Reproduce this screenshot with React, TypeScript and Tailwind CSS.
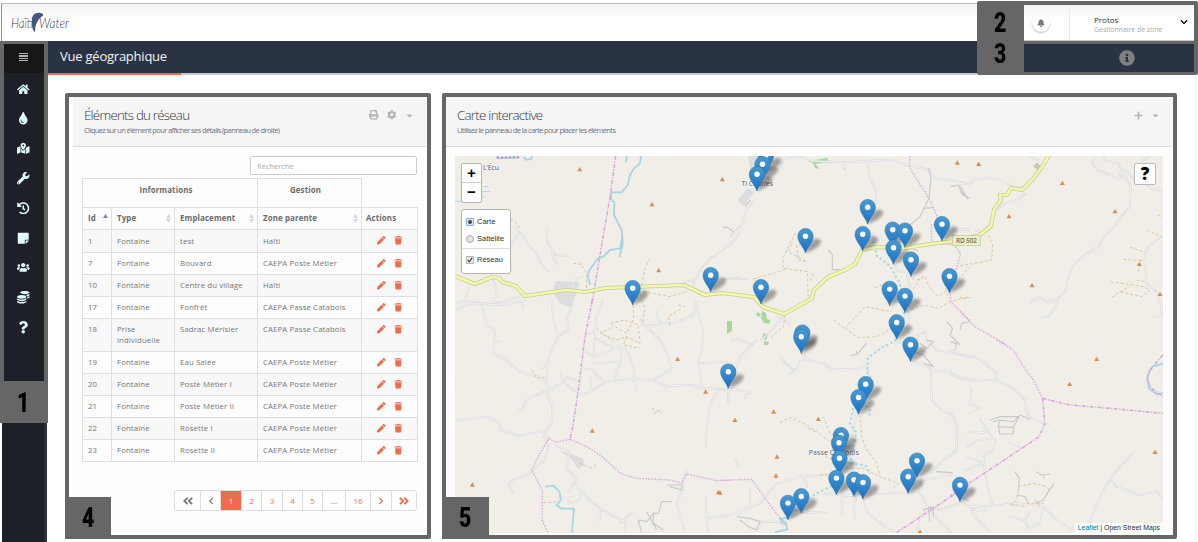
import React from 'react';
import {
  FaHome, FaTint, FaMapMarkedAlt, FaWrench, FaHistory, FaStickyNote, FaUsers, FaCoins,
  FaQuestion, FaPrint, FaCog, FaCaretDown, FaPlus, FaPen, FaTrash, FaBell, FaInfoCircle, FaChevronDown,
  FaChevronLeft, FaChevronRight, FaAngleDoubleLeft, FaAngleDoubleRight,
} from 'react-icons/fa';

const menu = [FaHome, FaTint, FaMapMarkedAlt, FaWrench, FaHistory, FaStickyNote, FaUsers, FaCoins, FaQuestion];

const rows = [
  ['1', 'Fontaine', 'test', 'Haïti'],
  ['7', 'Fontaine', 'Bouvard', 'CAEPA Poste Métier'],
  ['10', 'Fontaine', 'Centre du village', 'Haïti'],
  ['17', 'Fontaine', 'Fonfrèt', 'CAEPA Passe Catabois'],
  ['18', 'Prise individuelle', 'Sadrac Mérisier', 'CAEPA Passe Catabois'],
  ['19', 'Fontaine', 'Eau Salée', 'CAEPA Poste Métier'],
  ['20', 'Fontaine', 'Poste Métier I', 'CAEPA Poste Métier'],
  ['21', 'Fontaine', 'Poste Métier II', 'CAEPA Poste Métier'],
  ['22', 'Fontaine', 'Rosette I', 'CAEPA Poste Métier'],
  ['23', 'Fontaine', 'Rosette II', 'CAEPA Poste Métier'],
];

type Tile = {
  x: number; y: number;
  roads?: string; paths?: string; tracks?: string; water?: string; stream?: string;
  border?: string; limit?: string; peaks?: number[][];
};

const tiles: Tile[] = [
  {
    x: 440, y: 85,
    roads: 'M45 287 60 280M138 420 155 432M326 562 300 532 292 508 264 478 254 458 238 440 225 462 195 500 212 530 212 560M238 440 222 425M320 428 320 470 335 490 340 520 354 540M332 485 350 515 386 510M900 440 880 470 850 495 810 520 785 550 765 585 760 605M765 585 740 590 715 605M835 582 900 580M45 655 80 648 130 655 190 650 250 632M160 580 170 620 165 640M90 600 75 640M410 622 395 600 412 580 430 575',
    paths: 'M848 427 862 427 882 442',
    tracks: 'M212 402 232 415 240 435M400 535 425 538 440 565 440 620M630 520 615 550 605 600 590 640 580 655M610 620 690 635 740 620',
    water: 'M168 215 175 220 238 216M250 216 258 224 274 222 277 213M560 213 558 232M603 213 600 235 582 250 570 270 563 300 545 322 513 322M513 322 513 342 523 352 522 390 545 435 547 455 542 480 541 490 510 495 490 515 474 520 447 558 443 572 451 600M547 455 548 480 538 517',
    stream: 'M45 349 85 349M125 320 152 319M130 305 145 305M120 336 135 336',
    border: 'M527 213 511 330 490 450 470 570 455 660',
    peaks: [[419, 253], [847, 283], [636, 358], [656, 556]],
  },
  {
    x: 730, y: 145,
    roads: 'M70 170 50 195 35 240 0 275M120 75 152 70 160 42 210 35 250 48 340 52 412 48 480 44 535 62 600 75 615 100 650 105 720 115M412 48 418 95 438 135 438 165 420 190 415 235M0 402 55 402M155 515 130 550 90 590M155 515 180 540M490 350 500 375 530 385 540 430 525 470 538 520 528 560M570 600 562 570 585 560 590 590M420 280 428 265 438 285M665 253 720 255M0 590 20 580 70 600',
    paths: 'M595 68 603 98 597 160 570 215 540 240M580 190 610 188M295 315 307 328 307 374 332 374M650 530 668 550 660 570 690 600M662 125 685 120 698 150 720 160M720 530 695 535 690 555M545 310 565 318M45 185 62 165',
    tracks: 'M235 470 232 380 160 370 158 340 195 265 235 290 200 300 205 345 230 350 175 320 190 290M70 402 130 385 170 372M165 510 160 545 120 580M250 385 240 410M545 400 560 405 585 395 600 430 625 455 660 430 720 365M530 500 580 480 625 490 660 470 720 457M310 525 345 550 405 485 485 500M345 550 385 578 440 575 485 550M435 428 480 412M570 400 545 440M640 400 655 460',
    stream: 'M338 66 348 77',
    limit: 'M541 33 538 65 565 110 600 165 622 215 620 240 604 240 605 296 670 298M670 298 692 325 680 370 660 420 662 470 720 527',
    peaks: [[682, 53]],
  },
  {
    x: 960, y: 145,
    roads: 'M0 115 30 118 42 103 80 97 120 105 160 125 200 128M200 145 170 165 135 175 110 195M0 253 28 253M208 34 240 48M405 34 396 55 415 75 450 90 475 103 490 90 512 120 510 185 475 225 460 250 435 270 415 305 380 325 355 345 335 370 322 405 318 435 290 465 255 467 235 455 208 475M290 465 290 480 265 515 238 520M430 35 440 48 475 55 485 75 475 103M485 75 505 80 515 95 530 115M605 275 590 285 560 310 553 350 560 415 590 440 604 480 605 510 575 518M540 48 570 36M555 115 575 132 607 135M45 260 60 255',
    paths: 'M0 122 24 163M0 140 16 150',
    tracks: 'M85 270 98 300 95 345 70 350 0 363M560 255 605 275M510 307 555 322M490 343 550 347M452 410 550 425 570 435 545 455 480 440 452 460M480 440 510 425M530 405 555 410M535 380 545 340M0 458 25 457M595 212 608 214',
    limit: 'M0 500 45 545 140 600',
    peaks: [[56, 57], [307, 114], [147, 214], [465, 199], [538, 357], [600, 447], [216, 421]],
  },
  {
    x: 440, y: 300,
    roads: 'M125 15 140 75 165 90 160 160 205 185 240 215 310 235 325 265 325 295 338 325 335 370 310 400 330 415M165 125 185 128M45 28 95 10 190 15 260 0M245 0 250 30M335 0 340 60 355 110 385 90 380 55 395 20M355 110 330 160 320 200 322 260M320 200 300 205M323 270 290 285 260 300 245 330 232 333M45 362 145 350 178 370 182 390 240 408 300 395 322 390M310 400 325 440 315 480 260 525 220 538 205 555 222 580M345 435 390 455 378 505 405 530 415 565 450 600 480 625 560 670M480 625 478 665M330 270 370 245 385 230 415 245M362 215 370 245 400 270 415 283 440 280 500 245 580 235 640 242 680 258 750 255 790 265 865 268M580 235 590 275M640 242 695 205 680 155 660 120 615 75 640 75 700 70 760 45 770 0M615 75 600 55M680 258 678 278M650 30 655 60 680 75M490 0 468 50 465 110 460 170 435 155M465 110 500 135 540 140 545 175 530 220 520 245M460 170 510 155 525 135M460 190 530 185M450 230 455 275M425 205 460 210 470 225 500 250M555 140 580 200 585 235M770 20 790 90 785 150 775 185 785 265M775 190 865 185M835 270 810 315 800 385 797 440M865 268 865 310M745 510 730 530 728 570 710 610 735 698M797 585 800 655 870 645M800 655 805 698M45 235 45 270M385 580 400 545 425 575 420 600 390 610 380 590M350 600 400 590M540 670 575 640M560 660 555 698M430 110 470 90',
    paths: 'M680 555 725 555 725 570 690 560M695 605 665 605 655 640 640 640 620 665 595 660 605 698M620 635 650 690M640 640 640 670 670 690',
    tracks: 'M275 210 290 235 315 232M580 15 580 60 560 100 510 70 555 60 595 75 600 130 560 110 530 120 480 100 515 85M470 85 520 125M560 110 550 135 600 145M605 0 615 25 605 75M715 15 735 20M635 325 665 340M640 342 665 328M420 490 455 505 472 490M310 608 360 605M690 75 685 50 725 25',
    water: 'M315 560 340 557 358 575 363 600 350 615 365 626 402 626 396 698',
    border: 'M457 0 435 110 415 270 400 370 390 418',
    limit: 'M390 418 347 427 327 415 300 460 275 508 307 572 306 660 323 697M390 418 440 440 480 465 545 522 590 535 690 540 725 550 740 522 830 542 870 541',
    peaks: [[713, 177], [797, 275], [457, 392], [97, 554], [835, 576]],
  },
  {
    x: 720, y: 340,
    roads: 'M110 0 60 50 50 85M0 150 55 148 98 160M27 148 28 190M85 155 75 175M244 38 265 60 310 70 340 88 400 88 440 76M265 55 240 65 230 85 205 105M180 55 220 90M440 76 445 95M410 225 395 285 400 320 370 400M400 220 440 220 455 210M0 528 50 520 120 490 170 430 245 410 350 400M250 410 262 435 250 462 260 490M350 460 310 462M365 468 480 462 600 455 620 500 660 510 750 480M410 468 400 510 407 542M365 468 365 530M430 475 440 515 480 550 525 578M120 545 180 545 240 520 320 515M600 455 605 420 640 415 700 400M525 12 560 0M572 62 620 80 632 90 635 180 665 210 700 230 712 270 710 330 660 370 630 400M632 90 690 95 720 115 750 118M620 0 650 30 700 40 750 50M45 358 58 378M620 500 600 530 590 578M90 445 90 500 55 520M620 500 660 545 695 578',
    paths: 'M393 46 412 42 440 10M412 42 408 32M50 530 90 535 120 545 110 570 85 560 60 540M180 545 190 555M580 35 610 45 640 80 610 70M600 10 620 25 640 5 620 0M648 395 698 398M610 510 640 500 640 530M625 500 630 545',
    tracks: 'M180 248 210 232 250 250 290 275 330 305M310 230 330 280 380 300M420 225 425 290 440 330 470 370 480 410 535 430 515 450M380 385 430 385 475 408M265 265 285 275M300 405 345 405M315 350 345 360M395 285 370 290',
    water: 'M205 532 180 537 198 550 202 568 165 577',
    limit: 'M0 421 95 418 150 495 200 560',
    border: 'M530 578 750 432',
    peaks: [[45, 240], [161, 215], [295, 237], [171, 350], [168, 407], [600, 575], [0, 458]],
  },
  {
    x: 950, y: 340,
    roads: 'M0 30 35 45 75 50 110 75 140 100 138 118 100 122 50 118 0 102M138 118 180 140 200 155 225 180 232 220 245 235 298 256M63 145 60 190 92 205 55 220M0 215 20 250 20 330 0 350M90 235 110 270 100 278 50 275M110 270 135 300 130 330 100 350 105 400 115 450 128 500M50 320 85 300 135 295M50 350 100 370 45 390M172 308 215 322M30 485 60 500 130 498 200 490 280 500 320 540 370 572M60 500 75 530 118 575M80 495 70 515 110 508M175 530 225 540 240 515M225 540 235 565 270 550 280 500M552 330 540 350 515 375 480 415 500 440 570 465 620 455 640 478M480 415 440 490 410 572M590 120 600 150 635 160M0 415 0 405',
    paths: 'M120 240 150 230 205 230 190 245 145 240 130 245M145 260 190 262 190 282 150 282 145 260 150 240M190 262 210 225 240 238M195 395 208 415 205 450M258 395 275 405 302 402M280 405 282 415M200 465 225 470 235 490M255 490 280 480 295 455 312 430M0 5 20 10 15 30M30 470 55 482',
    tracks: 'M205 440 250 430 290 440 300 455M205 450 200 480 180 495 225 500M230 490 280 490 255 480 270 500',
    water: 'M640 70 625 75 610 78 597 95 593 115 597 145 620 163 640 160',
    limit: 'M140 0 190 30 220 80 250 120 278 175',
    border: 'M278 175 360 195 490 206 640 220M278 175 284 250 268 290 200 335 0 468M638 45 600 90 590 118 605 145 640 170',
    peaks: [[440, 57], [359, 132], [615, 336]],
  },
];

const pins = [
  [766, 172], [762.5, 181], [757, 191], [867.7, 224], [942, 241], [892.7, 246.5], [905, 247.5],
  [862.7, 251], [805.5, 253], [893.5, 264.5], [911, 276.5], [710.7, 292], [949.5, 293], [761, 304],
  [632.7, 305], [889.7, 305.8], [905, 312.8], [896.7, 339.2], [802.3, 349.5], [801.3, 353.5], [910.5, 361.5],
  [728.3, 388.5], [865.7, 401], [858.5, 414.2], [841, 452], [839, 459.500], [839.5, 475], [917, 477.5],
  [908.2, 493.5], [836.4, 494.8], [854, 496.5], [863, 499.2], [960, 501.8], [801.3, 513.2], [788, 519.8],
];

const mainRoad =
  'M455 276 475 284 492 277 499 278 502 282 516 286 525 296 566 290 585 292 606 288 684 285 705 295 722 293 754 297 763 307 784 314 806 302 812 298 814 290 828 277 845 270 855 264 862 250 876 247 905 248 930 244 955 241 980 235 991 226 994 210 1001 200 1000 195 1007 195 1011 188 1022 190 1033 179 1042 167 1049 155';

function MapDrawing() {
  return (
    <svg viewBox="455 156 708 377" className="block h-full w-full" fontFamily="'Open Sans', sans-serif">
      <defs>
        <linearGradient id="pin" x1="0" y1="0" x2="0" y2="1">
          <stop offset="0" stopColor="#4b9bd0" />
          <stop offset="1" stopColor="#1a6fc4" />
        </linearGradient>
        <filter id="soft" x="-50%" y="-50%" width="200%" height="200%">
          <feGaussianBlur stdDeviation="1.6" />
        </filter>
      </defs>
      <rect x="455" y="156" width="708" height="377" fill="#f1eee8" />
      <g fill="#dddddd">
        <path d="M555 281 579 282 577 292 571 308 560 303 553 292Z" />
        <path d="M748 156 766 156 757 190 752 178Z" />
        <path d="M559 450 582 458 585 465 578 469 573 461Z" />
        <path d="M737 200 748 188 754 192 744 206Z" />
      </g>
      <g fill="#a8d5a0">
        <path d="M808 161 827 158 829 162 815 164 820 169 815 168 813 163Z" />
        <path d="M727 321h5v10l-5 3Z" />
        <path d="M757 312l4 2-2 3-3-2ZM762 311l4 2 1 6 3 1-1 4-5-1-3-5ZM764 333l4 2-2 5-4-3ZM764 341l5 1-1 3-4 0Z" />
      </g>
      {tiles.map((t) => (
        <g key={`${t.x}-${t.y}`} transform={`translate(${t.x} ${t.y}) scale(0.33333)`} fill="none" strokeLinejoin="round">
          <path d={t.roads} stroke="#d6d6da" strokeWidth="5.8" />
          <path d={t.roads} stroke="#f8f7f4" strokeWidth="2.6" />
          <path d={t.paths} stroke="#c9c9c9" strokeWidth="3.5" />
          <path d={t.tracks} stroke="#dcc39a" strokeWidth="2.8" strokeDasharray="9 6" />
          <path d={t.water} stroke="#a9d5e2" strokeWidth="5.5" />
          <path d={t.stream} stroke="#a5cdf0" strokeWidth="2.5" />
          <path d={t.border} stroke="#daa4dc" strokeWidth="4.5" strokeDasharray="12 4 4 4" />
          <path d={t.limit} stroke="#dcaedd" strokeWidth="4.2" strokeDasharray="5 4" />
          {t.peaks?.map(([x, y]) => (
            <path key={`${x}-${y}`} d={`M${x} ${y - 7}l7.5 13h-15Z`} fill="#d68d50" />
          ))}
        </g>
      ))}
      <path d="M497 157.500H520" stroke="#c08cc8" strokeWidth="1.800" strokeDasharray="2 2" />
      <path
        d="M872 236 877 256 890 266 899 282 905 300 903 324 895 341 881 348 868 358 867 372 871 378M853 408 850 424 856 432 853 455 846 470M863 402 871 412 869 416M846 462 866 466 870 474M832 486 815 494 803 505 788 516"
        fill="none" stroke="#a9d9e6" strokeWidth="2.100" strokeDasharray="2.400 2.400"
      />
      <path d={mainRoad} fill="none" stroke="#c8cd8b" strokeWidth="4.200" strokeLinejoin="round" />
      <path d={mainRoad} fill="none" stroke="#f3f6b2" strokeWidth="2.700" strokeLinejoin="round" />
      <path d="M1037 162.500 1041 166 1037 169.500 1033 166Z" fill="#c8c7b2" />
      <rect x="952.500" y="235.500" width="28" height="10" fill="#ecefcb" stroke="#cdd2a4" />
      <g fill="#555" fontSize="7" stroke="#fff" strokeWidth="1" strokeOpacity="0.600" paintOrder="stroke">
        <text x="483" y="170" textLength="16">L'Écu</text>
        <text x="741.500" y="186.300" textLength="31.500">Ti Charles</text>
        <text x="808.800" y="455" textLength="50">Passe Catabois</text>
      </g>
      <text x="956" y="243" fontSize="6.500" fontWeight="600" fill="#6e7158" textLength="21">RD 502</text>
      {pins.map(([x, y]) => (
        <path key={`s${x}-${y}`} d={`M${x} ${y}c2-7 5-13 10-14 6-1 7 3 3 7-3 3-8 5-13 7Z`} fill="#000" opacity="0.33" filter="url(#soft)" />
      ))}
      {pins.map(([x, y]) => (
        <g key={`${x}-${y}`} transform={`translate(${x} ${y})`}>
          <path d="M0 0C-1.500-5.500-7.700-10.500-7.700-16.800A7.700 7.800 0 0 1 7.700-16.800C7.700-10.500 1.500-5.500 0 0Z" fill="url(#pin)" stroke="#2e78b4" strokeWidth="0.600" />
          <circle cy="-16.700" r="2.700" fill="#fff" />
        </g>
      ))}
    </svg>
  );
}

function Num({ children }: { children: React.ReactNode }) {
  return (
    <span className="inline-block scale-x-[0.76] font-['Roboto',sans-serif] text-[28px] leading-none font-black text-black">
      {children}
    </span>
  );
}

function Sorter() {
  return (
    <svg viewBox="0 0 5 9" className="h-[9px] w-[5px] shrink-0 fill-[#d5d5d5]">
      <path d="M2.500 0 5 4H0ZM2.500 9 5 5H0Z" />
    </svg>
  );
}

function PanelTitle({ title, sub, titleClass, subClass, children }: {
  title: string; sub: string; titleClass: string; subClass: string; children: React.ReactNode;
}) {
  return (
    <div className="flex h-[50px] shrink-0 justify-between border-b border-[#dadada] bg-[#f5f5f5] pt-[10px] pl-[11px]">
      <div>
        <h2 className={`text-[13.3px] leading-[17px] text-[#33353f] ${titleClass}`}>{title}</h2>
        <p className={`mt-px text-[7.5px] leading-[10px] text-[#6c7386] ${subClass}`}>{sub}</p>
      </div>
      <div className="flex h-[16px] items-center text-[#b4b4b4]">{children}</div>
    </div>
  );
}

const cell = 'border border-[#dfdfdf] px-[5px] align-top';

function NetworkTable() {
  return (
    <table className="mt-[3px] w-[335px] table-fixed border-collapse text-left text-[7.8px] leading-[11px] tracking-[0.12px] text-[#777]">
      <colgroup>
        <col className="w-[29px]" />
        <col className="w-[63px]" />
        <col className="w-[83px]" />
        <col className="w-[104px]" />
        <col className="w-[56px]" />
      </colgroup>
      <thead className="text-[7.9px] font-bold text-[#6b6b6b]">
        <tr className="h-[29px]">
          <th colSpan={3} className="border border-[#dfdfdf] pt-[6px] pr-[8px] text-center align-top">Informations</th>
          <th className="border border-[#dfdfdf] pt-[6px] pr-[8px] text-center align-top">Gestion</th>
          <th className="border-b border-[#dfdfdf]" />
        </tr>
        <tr className="h-[22px]">
          <th className="border border-[#dfdfdf] pr-[3px] pl-[5px]">
            <div className="flex items-center justify-between">Id
              <svg viewBox="0 0 5 9" className="h-[9px] w-[5px] fill-[#7b80d8]"><path d="M2.500 0 5 4H0Z" /></svg>
            </div>
          </th>
          {['Type', 'Emplacement', 'Zone parente'].map((h) => (
            <th key={h} className="border border-[#dfdfdf] pr-[3px] pl-[5px]">
              <div className="flex items-center justify-between">{h}<Sorter /></div>
            </th>
          ))}
          <th className="border border-[#dfdfdf] pl-[4px]">Actions</th>
        </tr>
      </thead>
      <tbody>
        {rows.map((r, i) => (
          <tr key={r[0]} className={`${i % 2 ? 'bg-[#fdfdfd]' : 'bg-[#f8f8f8]'} ${i === 4 ? 'h-[33px]' : i === 0 ? 'h-[23px]' : 'h-[22px]'}`}>
            {r.map((c, j) => (
              <td key={j} className={`${cell} ${i === 0 ? 'pt-[6px]' : 'pt-[5px]'}`}>{c}</td>
            ))}
            <td className={`${cell} pt-[6px]`}>
              <div className="flex gap-[8px] pl-[10px] text-[8.5px] text-[#f06a4d]"><FaPen /><FaTrash /></div>
            </td>
          </tr>
        ))}
      </tbody>
    </table>
  );
}

const pages: { w: string; c: React.ReactNode; k: string }[] = [
  { w: 'w-[26px] text-[#777] text-[12px]', c: <FaAngleDoubleLeft />, k: 'first' },
  { w: 'w-[20px] text-[#777] text-[8px]', c: <FaChevronLeft />, k: 'prev' },
  { w: 'w-[21px] bg-[#f06a4d] text-white', c: '1', k: '1' },
  { w: 'w-[20px]', c: '2', k: '2' },
  { w: 'w-[21px]', c: '3', k: '3' },
  { w: 'w-[20px]', c: '4', k: '4' },
  { w: 'w-[20px]', c: '5', k: '5' },
  { w: 'w-[23px] text-[#777]', c: '...', k: 'gap' },
  { w: 'w-[25px]', c: '16', k: '16' },
  { w: 'w-[21px] text-[8px]', c: <FaChevronRight />, k: 'next' },
  { w: 'w-[24px] text-[12px]', c: <FaAngleDoubleRight />, k: 'last' },
];

export default function App() {
  return (
    <div className="grid h-[542px] w-[1198px] grid-cols-[48px_929px_221px] grid-rows-[41px_34px_467px] overflow-hidden bg-white font-['Open_Sans',sans-serif]">
      <header className="col-span-2 flex pt-[3px] pl-[1px]">
        <div className="flex flex-1 items-center border-t border-l border-t-[#bdbdbd] border-l-[#8d8d8d] bg-linear-to-b from-[#f3f3f3] to-white to-40% pl-[8px]">
          <svg viewBox="0 0 72 26" className="h-[26px] w-[72px]" fontFamily="Lato, sans-serif" fontStyle="italic" fill="#35394a">
            <path d="M22 12C21 6 25 2 30 3 34 3 34 6 31 7 27 11 25 15 25 22 22 20 22 16 22 12Z" fill="#44577c" />
            <text x="1" y="18" fontSize="14" fontWeight="300" textLength="22" lengthAdjust="spacingAndGlyphs">Haïti</text>
            <text x="29" y="18" fontSize="14" fontWeight="300" textLength="30" lengthAdjust="spacingAndGlyphs">Water</text>
          </svg>
        </div>
      </header>

      <aside className="col-start-1 row-span-2 row-start-2 flex flex-col">
        <div className="flex h-[382px] flex-col bg-[#666] pt-[3px] pr-[4px] pl-[4px]">
          <div className="flex h-[29px] shrink-0 flex-col items-center justify-center gap-px bg-[#171717] pr-px pb-[3px]">
            {[0, 1, 2, 3].map((n) => <i key={n} className="h-[1.4px] w-[9px] bg-[#b5b5b5]" />)}
          </div>
          <nav className="flex h-[308px] shrink-0 flex-col items-center bg-[#1d2127] text-[12.5px] text-[#e0fbff]">
            {menu.map((Icon, i) => (
              <div key={i} className="flex h-[29.8px] items-center pt-[2px] pr-px"><Icon /></div>
            ))}
          </nav>
          <div className="flex flex-1 items-center justify-center pt-[2px] pr-px"><Num>1</Num></div>
        </div>
        <div className="mr-px ml-[2px] flex-1 border-r-[3px] border-[#2c3138] bg-[#1d2127]" />
      </aside>

      <div className="col-start-2 row-start-2 flex flex-col">
        <div className="flex h-[32px] items-center bg-[#2a3342] pl-[12px] text-[13px] text-[#f4f4f4]">
          <h1 className="tracking-[-0.23px]">Vue géographique</h1>
        </div>
        <div className="flex h-[2px] bg-[#c9c7cf]"><div className="w-[133px] bg-[#ee6a50]" /></div>
      </div>

      <div className="col-start-3 row-span-2 row-start-1 pt-px">
        <div className="flex h-full rounded-[2px] bg-[#666] pr-[4px]">
          <div className="flex w-[47px] flex-col items-center pt-[8px]">
            <div className="flex"><Num>2</Num></div>
            <div className="mt-[3px] flex"><Num>3</Num></div>
          </div>
          <div className="flex flex-1 flex-col pt-[4px]">
            <div className="flex h-[36px] border-b border-[#ccc] bg-linear-to-b from-[#f4f4f4] to-white to-40%">
              <div className="flex w-[46px] items-center border-r border-[#eaeaea] pl-[8px]">
                <span className="flex size-[18px] items-center justify-center rounded-full bg-white text-[8px] text-[#777] shadow-[0_1px_2px_#bbb]"><FaBell /></span>
              </div>
              <div className="flex flex-1 items-center justify-between pr-[6px] pl-[24px]">
                <div className="pt-[3px]">
                  <p className="text-[8px] leading-[10px] text-[#333]">Protos</p>
                  <p className="text-[6.9px] leading-[9px] text-[#aaa]">Gestionnaire de zone</p>
                </div>
                <FaChevronDown className="mb-[2px] size-[8px] text-black" />
              </div>
            </div>
            <div className="mt-[3px] flex h-[28px] items-center justify-center bg-[#2a3342] pb-px pl-[36px] text-[16px] text-[#808080]"><FaInfoCircle /></div>
          </div>
        </div>
      </div>

      <main className="col-span-2 col-start-2 row-start-3 mr-[2px] flex items-start gap-[11px] border-r border-[#eee] pt-[18px] pl-[17px]">
        <section className="relative flex h-[446px] w-[366px] flex-col rounded-[2px] border-4 border-[#666] bg-[#fdfdfd] pr-px pl-[4px]">
          <PanelTitle
            title="Éléments du réseau" titleClass="tracking-[-0.75px] font-light"
            sub="Cliquez sur un élément pour afficher ses détails (panneau de droite)" subClass="tracking-[-0.61px]"
          >
            <FaPrint className="mr-[8px] size-[9.5px]" />
            <FaCog className="mr-[9px] size-[9.5px]" />
            <FaCaretDown className="mr-[12px] size-[9px]" />
          </PanelTitle>
          <div className="flex flex-col pt-[9px] pl-[9px]">
            <input placeholder="Recherche" className="ml-[168px] h-[19px] w-[167px] rounded-[2px] border border-[#ccc] bg-white px-[6px] text-[7.5px] placeholder:text-[#aaa]" />
            <NetworkTable />
            <div className="mt-[28px] ml-[92px] flex h-[21px] w-[243px] overflow-hidden rounded-[3px] border border-[#ddd] bg-white text-[8px] text-[#f06a4d]">
              {pages.map((p) => (
                <div key={p.k} className={`flex shrink-0 items-center justify-center border-r border-[#ddd] last:border-r-0 ${p.w}`}>{p.c}</div>
              ))}
            </div>
          </div>
          <div className="absolute -bottom-1 -left-1 flex h-[42px] w-[46px] items-center justify-center bg-[#666]"><Num>4</Num></div>
        </section>

        <section className="relative flex h-[446px] w-[735px] flex-col rounded-[2px] border-4 border-[#666] bg-[#fdfdfd] pr-px">
          <PanelTitle
            title="Carte interactive" titleClass="tracking-[-0.72px] font-light"
            sub="Utilisez le panneau de la carte pour placer les éléments" subClass="tracking-[-0.61px]"
          >
            <FaPlus className="mr-[8px] size-[9px]" />
            <FaCaretDown className="mr-[12px] size-[9px]" />
          </PanelTitle>
          <div className="relative mt-[9px] ml-[9px] h-[377px] w-[708px] overflow-hidden font-['Liberation_Sans',sans-serif]">
            <MapDrawing />
            <div className="absolute top-[7px] left-[6px] flex h-[40px] w-[21px] flex-col rounded-[2px] border border-[#b8b5b0] bg-white text-center text-[15px] font-bold text-black">
              <span className="h-[19px] border-b border-[#ccc] leading-[18px]">+</span>
              <span className="leading-[18px]">−</span>
            </div>
            <div className="absolute top-[53px] left-[6px] flex h-[65px] w-[50px] flex-col rounded-[3px] border border-[#b8b5b0] bg-white text-[7.5px] text-[#333]">
              <label className="flex h-[20px] items-center gap-[3px] pt-[4px] pl-[4px]">
                <span className="flex size-[8px] items-center justify-center border border-[#8ab4ee] bg-[#dfe6f0]"><i className="size-[4px] rounded-full bg-[#444]" /></span>
                Carte
              </label>
              <label className="flex h-[18px] items-center gap-[3px] pl-[4px]">
                <span className="size-[8px] rounded-full border border-[#aaa] bg-[#e4e4e4]" />
                Sattelite
              </label>
              <label className="flex h-[22px] items-center gap-[3px] border-t border-[#ddd] pl-[4px]">
                <span className="flex size-[8px] items-center justify-center border border-[#bbb] bg-[#e8e8e8]">
                  <svg viewBox="0 0 8 8" className="size-[8px]"><path d="M1 4 3 6.500 7 1" fill="none" stroke="#333" strokeWidth="1.600" /></svg>
                </span>
                Réseau
              </label>
            </div>
            <div className="absolute top-[7px] right-[7px] flex size-[22px] items-center justify-center rounded-[2px] border border-[#bbb] bg-white pb-px font-['Open_Sans',sans-serif] text-[17px] font-extrabold text-black">?</div>
            <div className="absolute right-0 bottom-0 h-[10px] bg-white/70 px-[3px] text-[6.9px] leading-[10px] text-[#333]">
              <span className="text-[#0078a8]">Leaflet</span> | Open Street Maps
            </div>
          </div>
          <div className="absolute -bottom-1 -left-1 flex h-[42px] w-[47px] items-center justify-center bg-[#666]"><Num>5</Num></div>
        </section>
      </main>
    </div>
  );
}
